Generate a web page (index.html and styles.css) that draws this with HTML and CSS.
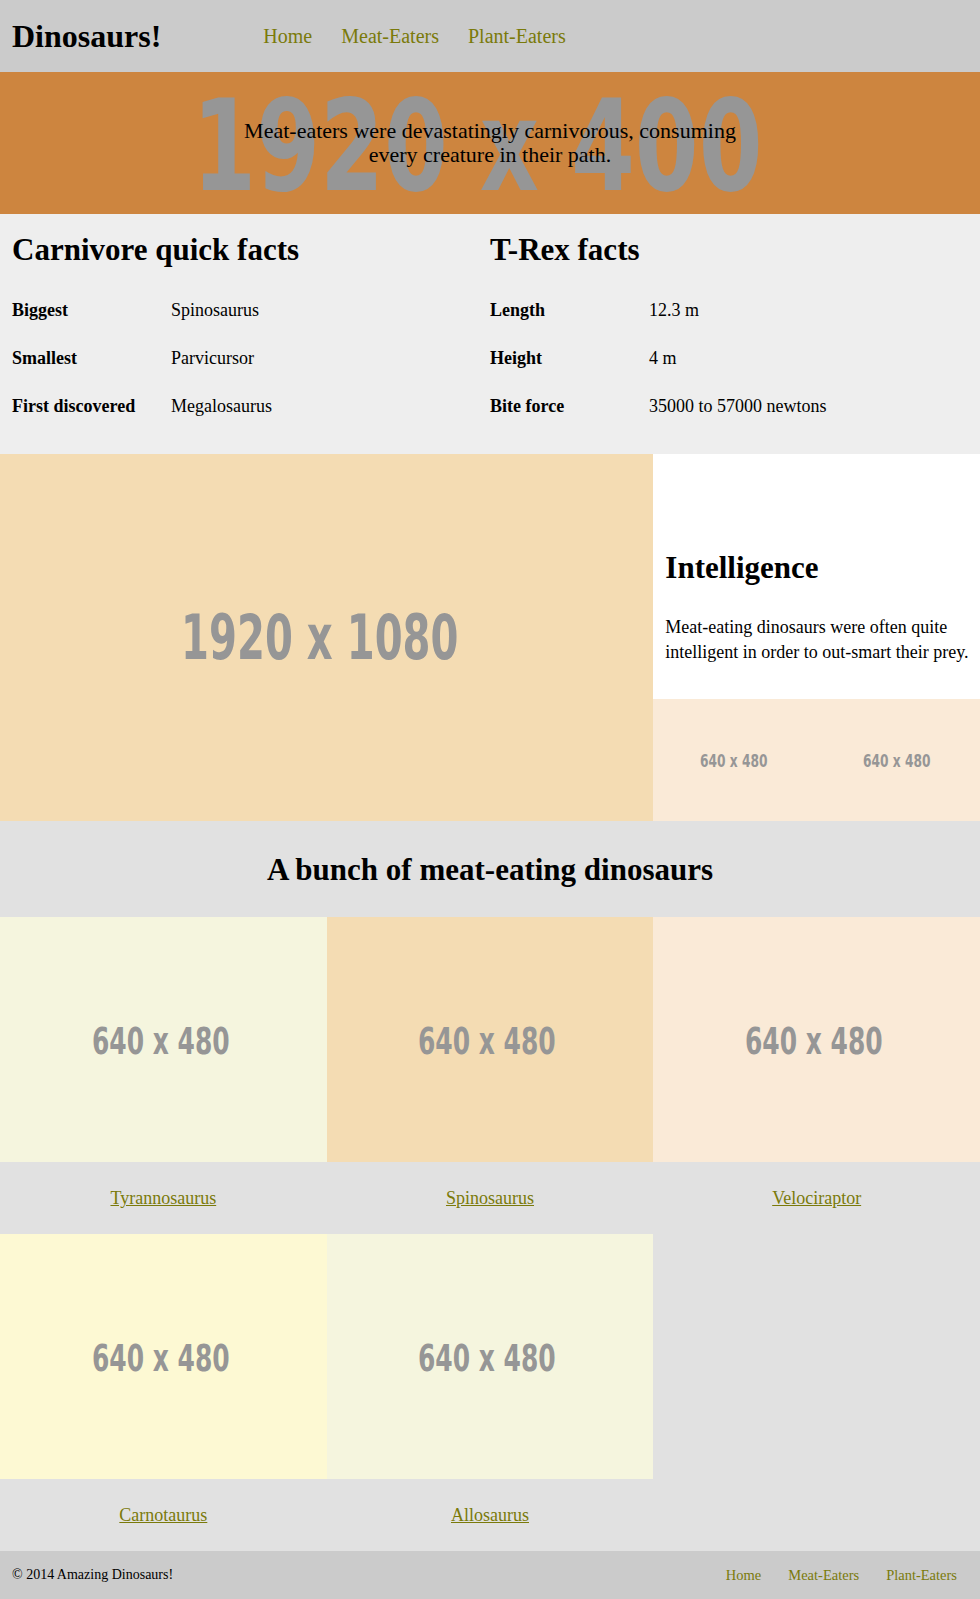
FILE: index.html
```html
<!DOCTYPE html>
<html lang="en">
<head>
<meta charset="utf-8">
<title>Dinosaurs!</title>
<link rel="stylesheet" href="styles.css">
</head>
<body>
<header class="site-header">
  <h1 class="logo">Dinosaurs!</h1>
  <nav class="main-nav">
    <a href="#">Home</a>
    <a href="#">Meat-Eaters</a>
    <a href="#">Plant-Eaters</a>
  </nav>
</header>

<section class="hero">
  <div class="ph hero-ph"><span>1920 x 400</span></div>
  <p class="hero-text">Meat-eaters were devastatingly carnivorous, consuming every creature in their path.</p>
</section>

<section class="facts">
  <div class="facts-col">
    <h2 class="heading">Carnivore quick facts</h2>
    <dl class="fact-list">
      <dt>Biggest</dt><dd>Spinosaurus</dd>
      <dt>Smallest</dt><dd>Parvicursor</dd>
      <dt>First discovered</dt><dd>Megalosaurus</dd>
    </dl>
  </div>
  <div class="facts-col">
    <h2 class="heading">T-Rex facts</h2>
    <dl class="fact-list">
      <dt>Length</dt><dd>12.3 m</dd>
      <dt>Height</dt><dd>4 m</dd>
      <dt>Bite force</dt><dd>35000 to 57000 newtons</dd>
    </dl>
  </div>
</section>

<section class="feature">
  <div class="ph big-ph wheat"><span>1920 x 1080</span></div>
  <div class="feature-side">
    <div class="intel">
      <h2 class="heading">Intelligence</h2>
      <p class="intel-text">Meat-eating dinosaurs were often quite intelligent in order to out-smart their prey.</p>
    </div>
    <div class="small-row">
      <div class="ph small-ph antique"><span>640 x 480</span></div>
      <div class="ph small-ph antique"><span>640 x 480</span></div>
    </div>
  </div>
</section>

<section class="gallery">
  <h2 class="heading gallery-title">A bunch of meat-eating dinosaurs</h2>
  <div class="gallery-grid">
    <figure class="dino">
      <div class="ph tile-ph beige"><span>640 x 480</span></div>
      <figcaption><a href="#">Tyrannosaurus</a></figcaption>
    </figure>
    <figure class="dino">
      <div class="ph tile-ph wheat"><span>640 x 480</span></div>
      <figcaption><a href="#">Spinosaurus</a></figcaption>
    </figure>
    <figure class="dino">
      <div class="ph tile-ph antique"><span>640 x 480</span></div>
      <figcaption><a href="#">Velociraptor</a></figcaption>
    </figure>
    <figure class="dino">
      <div class="ph tile-ph lemon"><span>640 x 480</span></div>
      <figcaption><a href="#">Carnotaurus</a></figcaption>
    </figure>
    <figure class="dino">
      <div class="ph tile-ph beige"><span>640 x 480</span></div>
      <figcaption><a href="#">Allosaurus</a></figcaption>
    </figure>
  </div>
</section>

<footer class="site-footer">
  <p class="copy">© 2014 Amazing Dinosaurs!</p>
  <nav class="foot-nav">
    <a href="#">Home</a>
    <a href="#">Meat-Eaters</a>
    <a href="#">Plant-Eaters</a>
  </nav>
</footer>
</body>
</html>
```
FILE: styles.css
```css
* { box-sizing: border-box; }

html, body {
  margin: 0;
  padding: 0;
}

body {
  font-family: "Liberation Serif", "Times New Roman", serif;
  font-size: 18px;
  line-height: 24px;
  color: #000;
  background: #e1e1e1;
}

a { color: #7a7a0a; }

/* Header */
.site-header {
  height: 72px;
  background: #cbcbcb;
  display: flex;
  align-items: center;
  padding: 0 12px;
}

.logo {
  margin: 0;
  font-size: 32px;
  line-height: 36px;
  font-weight: bold;
}

.main-nav {
  display: flex;
  gap: 29px;
  margin-left: 102px;
  font-size: 20px;
}

.main-nav a { text-decoration: none; }

/* Placeholder images */
.ph {
  display: flex;
  align-items: center;
  justify-content: center;
  font-family: "DejaVu Sans Condensed", "DejaVu Sans", sans-serif;
  font-weight: bold;
  color: #969696;
  line-height: 1;
  overflow: hidden;
}

.ph span {
  display: block;
  white-space: nowrap;
  transform: translateX(-0.08em) scaleX(0.75);
}

.wheat { background: #f4dcb3; }
.antique { background: #faead7; }
.beige { background: #f5f5de; }
.lemon { background: #fdf9d3; }

/* Hero */
.hero {
  height: 142px;
  background: #cd853f;
  display: grid;
  place-items: center;
  overflow: hidden;
}

.hero > * { grid-area: 1 / 1; }

.hero-ph {
  font-size: 126px;
  padding-top: 8px;
  z-index: 0;
}

.hero-ph span { transform: translateX(-0.1em) scaleX(0.81); }

.hero-text {
  position: relative;
  z-index: 1;
  margin: 0;
  max-width: 520px;
  text-align: center;
  font-size: 22px;
  line-height: 24px;
}

/* Facts */
.facts {
  display: grid;
  grid-template-columns: 1fr 1fr;
  background: #eeeeee;
  padding: 18px 12px 24px;
}

.heading {
  margin: 0;
  font-size: 31px;
  line-height: 36px;
  font-weight: bold;
}

.fact-list {
  display: grid;
  grid-template-columns: 159px 1fr;
  margin: 18px 0 0;
}

.fact-list dt,
.fact-list dd {
  margin: 0;
  padding: 12px 0;
}

.fact-list dt { font-weight: bold; }

/* Feature */
.feature {
  display: grid;
  grid-template-columns: 2fr 1fr;
}

.big-ph {
  aspect-ratio: 16 / 9;
  font-size: 62px;
}

.big-ph span { transform: translateX(-0.11em) scaleX(0.72); }

.feature-side {
  display: flex;
  flex-direction: column;
}

.intel {
  aspect-ratio: 4 / 3;
  background: #fff;
  padding: 96px 8px 0 12px;
}

.intel-text {
  margin: 29px 0 0;
  line-height: 24.5px;
}

.small-row {
  display: grid;
  grid-template-columns: 1fr 1fr;
}

.small-ph {
  aspect-ratio: 4 / 3;
  font-size: 17px;
  padding-top: 2px;
}

.small-ph span { transform: translateX(-0.08em) scaleX(0.8); }

/* Gallery */
.gallery { background: #e1e1e1; }

.gallery-title {
  text-align: center;
  padding: 31px 0 29px;
}

.gallery-grid {
  display: grid;
  grid-template-columns: repeat(3, 1fr);
}

.dino { margin: 0; }

.tile-ph {
  aspect-ratio: 4 / 3;
  font-size: 37px;
  padding-top: 4px;
}

.dino figcaption {
  height: 72px;
  display: flex;
  align-items: center;
  justify-content: center;
}

/* Footer */
.site-footer {
  height: 48px;
  background: #cbcbcb;
  display: flex;
  align-items: center;
  justify-content: space-between;
  padding: 0 23px 0 12px;
}

.copy {
  margin: 0;
  font-size: 14px;
}

.foot-nav {
  display: flex;
  gap: 27px;
  font-size: 14.5px;
}

.foot-nav a { text-decoration: none; }
```
